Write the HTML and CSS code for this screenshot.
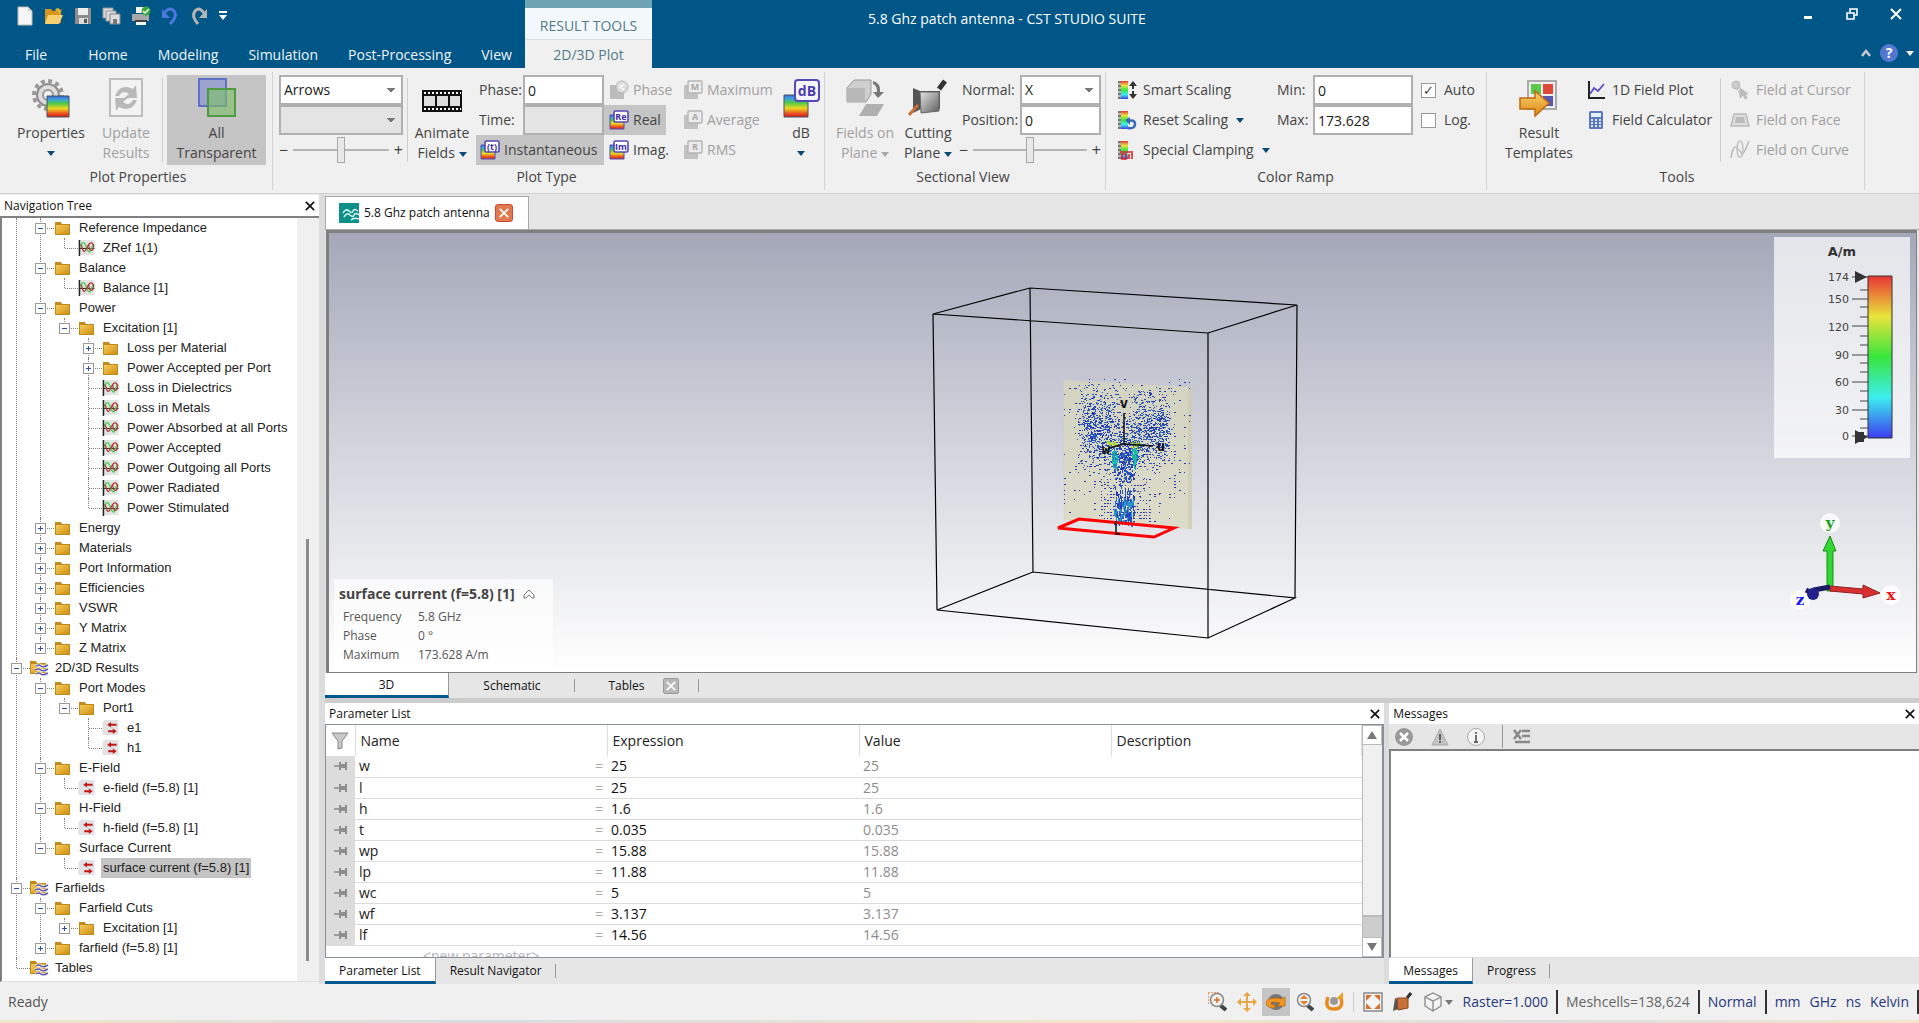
FILE: index.html
```html
<!DOCTYPE html>
<html lang="en">
<head>
<meta charset="utf-8">
<title>5.8 Ghz patch antenna - CST STUDIO SUITE</title>
<link rel="stylesheet" href="styles.css">
</head>
<body>
<svg class="defs" aria-hidden="true">
  <defs>
    <linearGradient id="rain" x1="0" y1="0" x2="0" y2="1"><stop offset="0" stop-color="#3c62d8"/><stop offset=".15" stop-color="#3aa0e0"/><stop offset=".35" stop-color="#4cc84a"/><stop offset=".6" stop-color="#f0d820"/><stop offset=".85" stop-color="#e84a20"/><stop offset="1" stop-color="#d82018"/></linearGradient>
    <linearGradient id="ramp" x1="0" y1="0" x2="0" y2="1"><stop offset="0" stop-color="#ea3434"/><stop offset=".25" stop-color="#e8e43c"/><stop offset=".5" stop-color="#38e63c"/><stop offset=".75" stop-color="#3ceef0"/><stop offset="1" stop-color="#3c3ef0"/></linearGradient>
    <linearGradient id="gold" x1="0" y1="0" x2="1" y2="1"><stop offset="0" stop-color="#f4c95c"/><stop offset=".5" stop-color="#e5ae36"/><stop offset="1" stop-color="#c99016"/></linearGradient>
    <linearGradient id="steel" x1="0" y1="0" x2="1" y2="1"><stop offset="0" stop-color="#e4e4e4"/><stop offset="1" stop-color="#5c5c5c"/></linearGradient>
    <linearGradient id="orange" x1="0" y1="0" x2="0" y2="1"><stop offset="0" stop-color="#f8d070"/><stop offset="1" stop-color="#e08a10"/></linearGradient>
  </defs>
  <symbol id="folder" viewBox="0 0 17 16"><path d="M1 2h6l1 2h8v11H1z" fill="#c08a1c"/><path d="M2 5h13v9H2z" fill="url(#gold)"/></symbol>
  <symbol id="wfolder" viewBox="0 0 19 16"><path d="M0 1h6l1 2h9v11H0z" fill="#c08a18"/><path d="M1 4h14v9H1z" fill="url(#gold)"/><path d="M6 6q3-2 5 0t7-1M5 10q4-2 6 0t7-1M6 14q3-2 5 0t7-1" fill="none" stroke="#fff" stroke-width="3"/><path d="M6 6q3-2 5 0t7-1M5 10q4-2 6 0t7-1M6 14q3-2 5 0t7-1" fill="none" stroke="#5a58a8" stroke-width="1.5"/></symbol>
  <symbol id="plot" viewBox="0 0 17 17"><path d="M1 0h16v16H1z" fill="#e3e3e3"/><path d="M1 0v17" stroke="#222" stroke-width="1.6"/><path d="M1 9h16" stroke="#222"/><path d="M2 8C4 1 6 1 8 7s4 7 5 4 2-6 4-6" fill="none" stroke="#4ad85c" stroke-width="1.7"/><path d="M2 5c2 0 2 7 4 7s3-4 4-6 3-4 5-2 1 7-1 7-3-3-3-6" fill="none" stroke="#b83238" stroke-width="1.3"/></symbol>
  <symbol id="arrows" viewBox="0 0 17 17"><path d="M2 0h15v16H0V3z" fill="#e2e2e2"/><path d="M5 5l4-3v2h6v2H9v2zM15 12l-4-3v2H6v2h5v2z" fill="#c01818"/></symbol>
  <symbol id="pin" viewBox="0 0 14 10"><path d="M0 5h5" stroke="#8a8a8a" stroke-width="1.5"/><path d="M5 1h2v2h4V1h2v8h-2V7H7v2H5z" fill="#8e8e8e"/></symbol>
  <symbol id="x" viewBox="0 0 12 12"><path d="M1 1l10 10M11 1L1 11" stroke="currentColor" stroke-width="2" fill="none"/></symbol>
  <symbol id="down" viewBox="0 0 8 5"><path d="M0 0h8L4 5z" fill="currentColor"/></symbol>
  <symbol id="card" viewBox="0 0 20 20"><path d="M1 5h14v14H1z" fill="url(#rain)" stroke="#4a50b8"/><rect x="5" y="1" width="14" height="11" rx="1.5" fill="#fff" stroke="#5548b8" stroke-width="1.6"/></symbol>
  <symbol id="gcard" viewBox="0 0 20 20"><path d="M1 5h14v14H1z" fill="#c2c2c2"/><rect x="5" y="1" width="14" height="12" rx="1" fill="#ececec" stroke="#b4b4b4" stroke-width="1.4"/></symbol>
  <symbol id="scale" viewBox="0 0 20 20"><path d="M1 1h10v18H1z" fill="#777"/><path d="M4 1h7v18H4z" fill="url(#ramp)"/><path d="M1 4h3M1 8h3M1 12h3M1 16h3" stroke="#fff"/></symbol>
  <symbol id="lens" viewBox="0 0 20 20"><path d="M12 13l6 5" stroke="#444" stroke-width="4"/><circle cx="9" cy="8" r="6.5" fill="#f2f2f2" stroke="#8a8a8a" stroke-width="1.6"/></symbol>
</svg>

<div class="app">
  <header class="titlebar">
    <div class="top-left">
      <div class="quick">
        <button aria-label="New"><svg viewBox="0 0 20 20"><path d="M3 1h10l4 4v14H3z" fill="#f6f6f6" stroke="#bbb"/><path d="M13 1v4h4" fill="#ccc"/></svg></button>
        <button aria-label="Open"><svg viewBox="0 0 20 20"><path d="M1 3h6l2 2h8v12H1z" fill="#d89418"/><path d="M4 9h15l-4 9H1z" fill="#f8d070"/><path d="M11 4q3-4 5 0l2-1-2 5-4-3z" fill="#e8b030"/></svg></button>
        <button aria-label="Save"><svg viewBox="0 0 20 20"><path d="M2 2h16v16H2z" fill="#8c8c8c"/><path d="M5 2h10v7H5z" fill="#eee"/><path d="M6 12h9v6H6z" fill="#ddd"/><path d="M11 13h3v4h-3z" fill="#555"/></svg></button>
        <button aria-label="Save copies"><svg viewBox="0 0 20 20"><path d="M1 2h10v10H1z" fill="#d8d8d8" stroke="#999"/><path d="M4 5h10v10H4z" fill="#d8d8d8" stroke="#999"/><path d="M8 8h10v10H8z" fill="#ddd" stroke="#888"/><path d="M11 13h4v5h-4z" fill="#777"/></svg></button>
        <button aria-label="Print"><svg viewBox="0 0 20 20"><path d="M5 1h9v6H5zM5 14h10v5H5z" fill="#f4f4f4"/><path d="M1 8h17v7H1z" fill="#a8a8a8"/><path d="M4 15h12" stroke="#444" stroke-width="2"/><circle cx="15" cy="5" r="4.5" fill="#38a838"/><path d="M12 5l2 2 4-4" stroke="#fff" fill="none" stroke-width="1.4"/></svg></button>
        <button aria-label="Undo"><svg viewBox="0 0 20 20"><path d="M4 7q6-7 10-2t-4 13" fill="none" stroke="#4a78e0" stroke-width="3"/><path d="M2 3v9h8z" fill="#4a78e0"/></svg></button>
        <button aria-label="Redo"><svg viewBox="0 0 20 20"><path d="M15 7q-5-7-9-2t3 13" fill="none" stroke="#b4b4b4" stroke-width="3"/><path d="M18 3v9h-8z" fill="#b4b4b4"/></svg></button>
        <button class="narrow" aria-label="Customize"><svg viewBox="0 0 10 12"><path d="M1 1h8v2H1zM1 5h8L5 10z" fill="#fff"/></svg></button>
      </div>
      <nav class="menu">
        <a href="#" class="m-file">File</a><a href="#">Home</a><a href="#">Modeling</a><a href="#">Simulation</a><a href="#">Post-Processing</a><a href="#">View</a>
      </nav>
    </div>
    <div class="context"><span class="ctx-title">RESULT TOOLS</span><a href="#" class="ctx-tab">2D/3D Plot</a></div>
    <div class="caption">5.8 Ghz patch antenna - CST STUDIO SUITE</div>
    <div class="win">
      <div class="win-row">
        <button aria-label="Minimize"><svg viewBox="0 0 12 12"><path d="M2 8h8v3H2z" fill="#fff"/></svg></button>
        <button aria-label="Restore"><svg viewBox="0 0 12 12"><path d="M4 4V1h7v6H8M1 5h7v6H1z" fill="none" stroke="#fff" stroke-width="1.6"/></svg></button>
        <button aria-label="Close"><svg><use href="#x"/></svg></button>
      </div>
      <div class="win-row help">
        <button aria-label="Collapse ribbon"><svg viewBox="0 0 12 12"><path d="M2 9l4-5 4 5" fill="none" stroke="#ccc" stroke-width="2.5"/></svg></button>
        <button class="q" aria-label="Help">?</button>
        <button class="tiny" aria-label="Help options"><svg viewBox="0 0 8 5"><use href="#down"/></svg></button>
      </div>
    </div>
  </header>

  <section class="ribbon">
    <div class="group g-prop">
      <div class="tools">
        <button class="big b78"><svg viewBox="0 0 40 40"><circle cx="17" cy="17" r="11" fill="#ddd" stroke="#8e8e8e" stroke-width="2"/><circle cx="17" cy="17" r="14" fill="none" stroke="#999" stroke-width="4" stroke-dasharray="4 3.3"/><circle cx="17" cy="17" r="5" fill="#f0f0f0" stroke="#999" stroke-width="2"/><path d="M16 18h22v21H16z" fill="url(#rain)" stroke="#456"/></svg><span>Properties</span><i class="dd"></i></button>
        <button class="big b72 off"><svg viewBox="0 0 40 40"><path d="M4 1h32v37H4z" fill="#f3f3f3" stroke="#bdbdbd" stroke-width="2"/><path d="M9 18q5-13 18-7l3-4 1 13H18l5-4q-6-5-10 2zM31 22q-5 13-18 7l-3 4-1-13h13l-5 4q6 5 10-2z" fill="#b9b9b9"/></svg><span>Update<br>Results</span></button>
        <span class="sep"></span>
        <button class="big b99 on"><svg viewBox="0 0 40 40"><path d="M2 1h27v27H2z" fill="#9ca4ce" stroke="#5e70c8" stroke-width="2"/><path d="M11 11h27v27H11z" fill="#7fbf6c" fill-opacity=".65" stroke="#4e9a42" stroke-width="2"/></svg><span>All<br>Transparent</span></button>
      </div>
      <h2>Plot Properties</h2>
    </div>

    <div class="group g-type">
      <div class="tools">
        <div class="col c128">
          <select aria-label="Plot type"><option>Arrows</option></select>
          <select aria-label="Plot subtype" disabled><option></option></select>
          <div class="slider"><span>−</span><input type="range" aria-label="Density" value="50"><span>+</span></div>
        </div>
        <span class="sep"></span>
        <button class="big b68"><svg viewBox="0 0 40 40"><path d="M0 12h40v22H0z" fill="#111"/><path d="M2 15h37M2 31h37" stroke="#fff" stroke-width="2" stroke-dasharray="2 2"/><path d="M2 18h11v10H2zM15 18h11v10H15zM28 18h10v10H28z" fill="#ddd"/></svg><span>Animate<br>Fields <i class="dd"></i></span></button>
        <div class="col c128 phase">
          <div class="field"><label for="ph">Phase:</label><input id="ph" value="0"></div>
          <div class="field"><label for="tm">Time:</label><input id="tm" disabled></div>
          <button class="small on"><svg viewBox="0 0 20 20"><use href="#card"/><text x="12" y="10" class="ic">(t)</text></svg>Instantaneous</button>
        </div>
        <div class="col c74">
          <button class="small off"><svg viewBox="0 0 20 20"><path d="M1 5h14v14H1z" fill="#bcbcbc"/><circle cx="13" cy="7" r="6" fill="#ddd" stroke="#b4b4b4"/><path d="M15 4l-4 3 4 3" fill="none" stroke="#fff" stroke-width="1.5"/></svg>Phase</button>
          <button class="small on fit"><svg viewBox="0 0 20 20"><use href="#card"/><text x="12" y="10" class="ic">Re</text></svg>Real</button>
          <button class="small"><svg viewBox="0 0 20 20"><use href="#card"/><text x="12" y="10" class="ic">Im</text></svg>Imag.</button>
        </div>
        <div class="col c102">
          <button class="small off"><svg viewBox="0 0 20 20"><use href="#gcard"/><text x="12" y="10" class="ic g">M</text></svg>Maximum</button>
          <button class="small off"><svg viewBox="0 0 20 20"><use href="#gcard"/><text x="12" y="10" class="ic g">A</text></svg>Average</button>
          <button class="small off"><svg viewBox="0 0 20 20"><use href="#gcard"/><text x="12" y="10" class="ic g">R</text></svg>RMS</button>
        </div>
        <button class="big b42"><svg viewBox="0 0 40 40"><path d="M3 17h24v22H3z" fill="url(#rain)" stroke="#456"/><rect x="14" y="2" width="24" height="21" rx="3" fill="#f4f4fc" stroke="#5548b8" stroke-width="2"/><text x="26" y="18" class="db">dB</text></svg><span>dB</span><i class="dd"></i></button>
      </div>
      <h2>Plot Type</h2>
    </div>

    <div class="group g-sect">
      <div class="tools">
        <button class="big b68 off"><svg viewBox="0 0 40 40"><path d="M2 10L9 2h17v14l-5 8H2z" fill="#cfcfcf" stroke="#999"/><path d="M2 10h18v14H2z" fill="#b8b8b8"/><path d="M28 3q8 2 7 11h4l-6 6-5-6h4q0-7-4-8z" fill="#777"/><path d="M21 26h18l-7 12H14z" fill="#b0b0b0"/></svg><span>Fields on<br>Plane <i class="dd"></i></span></button>
        <button class="big b58"><svg viewBox="0 0 40 40"><path d="M31 11l6-8" stroke="#333" stroke-width="5"/><path d="M5 10l7 3h20v18H13l-8 4z" fill="#555"/><path d="M12 14h19v19l-18 2z" fill="url(#steel)" stroke="#666"/><path d="M1 37l9-10" stroke="#c87038" stroke-width="3"/></svg><span>Cutting<br>Plane <i class="dd"></i></span></button>
        <div class="col c142">
          <div class="field"><label for="nm">Normal:</label><select id="nm"><option>X</option></select></div>
          <div class="field"><label for="ps">Position:</label><input id="ps" value="0"></div>
          <div class="slider"><span>−</span><input type="range" aria-label="Plane position" value="50"><span>+</span></div>
        </div>
      </div>
      <h2>Sectional View</h2>
    </div>

    <div class="group g-ramp">
      <div class="tools">
        <div class="col c164">
          <button class="small"><svg viewBox="0 0 20 20"><use href="#scale"/><path d="M16 1l4 5h-3v3h-2V6h-3zM16 19l4-5h-3v-3h-2v3h-3z" fill="#333"/></svg>Smart Scaling</button>
          <button class="small"><svg viewBox="0 0 20 20"><use href="#scale"/><path d="M10 11q8-2 8 3t-7 4" fill="none" stroke="#3a68b8" stroke-width="2.500"/><path d="M8 10l5-3v8z" fill="#3a68b8"/></svg>Reset Scaling <i class="dd"></i></button>
          <button class="small"><svg viewBox="0 0 20 20"><use href="#scale"/><path d="M3 12h13M5 19v-5h4v5zM12 19v-5M15 13v6" fill="none" stroke="#e02020" stroke-width="1.600"/></svg>Special Clamping <i class="dd"></i></button>
        </div>
        <div class="col c136">
          <div class="field"><label for="mn">Min:</label><input id="mn" value="0"></div>
          <div class="field"><label for="mx">Max:</label><input id="mx" value="173.628"></div>
        </div>
        <div class="col checks">
          <label><input type="checkbox" checked>Auto</label>
          <label><input type="checkbox">Log.</label>
        </div>
      </div>
      <h2>Color Ramp</h2>
    </div>

    <div class="group g-tools">
      <div class="tools">
        <button class="big b78"><svg viewBox="0 0 40 40"><path d="M9 3h28v28H9z" fill="#eee" stroke="#aaa" stroke-width="2"/><path d="M12 6h10v10H12z" fill="#5cc84c"/><path d="M24 6h10v10H24z" fill="#e04838"/><path d="M24 18h10v10H24z" fill="#5858b0"/><path d="M1 20h15v-7l14 12-14 13v-7H1z" fill="url(#orange)" stroke="#c06a10" stroke-width="1.500"/></svg><span>Result<br>Templates</span></button>
        <div class="col c142">
          <button class="small"><svg viewBox="0 0 20 20"><path d="M3 1v17h16" fill="none" stroke="#222" stroke-width="2"/><path d="M4 14l4-6 4 3 6-7" fill="none" stroke="#5a50c0" stroke-width="1.800"/></svg>1D Field Plot</button>
          <button class="small"><svg viewBox="0 0 20 20"><rect x="3" y="1" width="14" height="18" rx="1.500" fill="#5a78c0"/><path d="M5 3h10v4H5z" fill="#e8f0fc"/><path d="M5 10h10M5 13h10M5 16h10" stroke="#dce4f8" stroke-width="2" stroke-dasharray="2 2"/></svg>Field Calculator</button>
        </div>
        <span class="sep"></span>
        <div class="col c136 last">
          <button class="small off"><svg viewBox="0 0 20 20"><circle cx="6" cy="5" r="4" fill="#ccc" stroke="#bbb"/><path d="M7 9l3 5M10 8v10l3-3 2 4 2-1-2-4h3z" fill="#bbb" stroke="#bbb"/></svg>Field at Cursor</button>
          <button class="small off"><svg viewBox="0 0 20 20"><path d="M4 4h12l3 12H1z" fill="#ddd" stroke="#bbb" stroke-width="1.500"/><path d="M6 7h8l1 6H5z" fill="#bbb"/></svg>Field on Face</button>
          <button class="small off"><svg viewBox="0 0 20 20"><path d="M1 18q2-14 6-10t5 6 7-13" fill="none" stroke="#bbb" stroke-width="1.500"/><ellipse cx="10" cy="9" rx="3" ry="8" fill="none" stroke="#c4c4c4" stroke-width="1.500"/></svg>Field on Curve</button>
        </div>
      </div>
      <h2>Tools</h2>
    </div>
  </section>

  <main class="work">
    <aside class="nav">
      <header class="dock-title"><span>Navigation Tree</span><button aria-label="Close navigation tree"><svg><use href="#x"/></svg></button></header>
      <div class="nav-body">
        <ul class="tree">
          <li><ul>
            <li><div class="row"><button class="minus" aria-label="Collapse"></button><svg><use href="#folder"/></svg>Reference Impedance</div>
              <ul><li><div class="row"><svg><use href="#plot"/></svg>ZRef 1(1)</div></li></ul></li>
            <li><div class="row"><button class="minus" aria-label="Collapse"></button><svg><use href="#folder"/></svg>Balance</div>
              <ul><li><div class="row"><svg><use href="#plot"/></svg>Balance [1]</div></li></ul></li>
            <li><div class="row"><button class="minus" aria-label="Collapse"></button><svg><use href="#folder"/></svg>Power</div>
              <ul><li><div class="row"><button class="minus" aria-label="Collapse"></button><svg><use href="#folder"/></svg>Excitation [1]</div>
                <ul>
                  <li><div class="row"><button class="plus" aria-label="Expand"></button><svg><use href="#folder"/></svg>Loss per Material</div></li>
                  <li><div class="row"><button class="plus" aria-label="Expand"></button><svg><use href="#folder"/></svg>Power Accepted per Port</div></li>
                  <li><div class="row"><svg><use href="#plot"/></svg>Loss in Dielectrics</div></li>
                  <li><div class="row"><svg><use href="#plot"/></svg>Loss in Metals</div></li>
                  <li><div class="row"><svg><use href="#plot"/></svg>Power Absorbed at all Ports</div></li>
                  <li><div class="row"><svg><use href="#plot"/></svg>Power Accepted</div></li>
                  <li><div class="row"><svg><use href="#plot"/></svg>Power Outgoing all Ports</div></li>
                  <li><div class="row"><svg><use href="#plot"/></svg>Power Radiated</div></li>
                  <li><div class="row"><svg><use href="#plot"/></svg>Power Stimulated</div></li>
                </ul></li></ul></li>
            <li><div class="row"><button class="plus" aria-label="Expand"></button><svg><use href="#folder"/></svg>Energy</div></li>
            <li><div class="row"><button class="plus" aria-label="Expand"></button><svg><use href="#folder"/></svg>Materials</div></li>
            <li><div class="row"><button class="plus" aria-label="Expand"></button><svg><use href="#folder"/></svg>Port Information</div></li>
            <li><div class="row"><button class="plus" aria-label="Expand"></button><svg><use href="#folder"/></svg>Efficiencies</div></li>
            <li><div class="row"><button class="plus" aria-label="Expand"></button><svg><use href="#folder"/></svg>VSWR</div></li>
            <li><div class="row"><button class="plus" aria-label="Expand"></button><svg><use href="#folder"/></svg>Y Matrix</div></li>
            <li><div class="row"><button class="plus" aria-label="Expand"></button><svg><use href="#folder"/></svg>Z Matrix</div></li>
          </ul></li>
          <li><div class="row"><button class="minus" aria-label="Collapse"></button><svg class="wide"><use href="#wfolder"/></svg>2D/3D Results</div>
            <ul>
              <li><div class="row"><button class="minus" aria-label="Collapse"></button><svg><use href="#folder"/></svg>Port Modes</div>
                <ul><li><div class="row"><button class="minus" aria-label="Collapse"></button><svg><use href="#folder"/></svg>Port1</div>
                  <ul>
                    <li><div class="row"><svg><use href="#arrows"/></svg>e1</div></li>
                    <li><div class="row"><svg><use href="#arrows"/></svg>h1</div></li>
                  </ul></li></ul></li>
              <li><div class="row"><button class="minus" aria-label="Collapse"></button><svg><use href="#folder"/></svg>E-Field</div>
                <ul><li><div class="row"><svg><use href="#arrows"/></svg>e-field (f=5.8) [1]</div></li></ul></li>
              <li><div class="row"><button class="minus" aria-label="Collapse"></button><svg><use href="#folder"/></svg>H-Field</div>
                <ul><li><div class="row"><svg><use href="#arrows"/></svg>h-field (f=5.8) [1]</div></li></ul></li>
              <li><div class="row"><button class="minus" aria-label="Collapse"></button><svg><use href="#folder"/></svg>Surface Current</div>
                <ul><li><div class="row"><svg><use href="#arrows"/></svg><mark>surface current (f=5.8) [1]</mark></div></li></ul></li>
            </ul></li>
          <li><div class="row"><button class="minus" aria-label="Collapse"></button><svg class="wide"><use href="#wfolder"/></svg>Farfields</div>
            <ul>
              <li><div class="row"><button class="minus" aria-label="Collapse"></button><svg><use href="#folder"/></svg>Farfield Cuts</div>
                <ul><li><div class="row"><button class="plus" aria-label="Expand"></button><svg><use href="#folder"/></svg>Excitation [1]</div></li></ul></li>
              <li><div class="row"><button class="plus" aria-label="Expand"></button><svg><use href="#folder"/></svg>farfield (f=5.8) [1]</div></li>
            </ul></li>
          <li><div class="row"><svg class="wide"><use href="#wfolder"/></svg>Tables</div></li>
        </ul>
        <div class="nav-scroll"><span></span></div>
      </div>
    </aside>

    <section class="docs">
      <div class="doc-tabs">
        <div class="doc-tab"><svg viewBox="0 0 20 20"><path d="M0 0h20v20H0z" fill="#0e9088"/><path d="M4 10q3-5 6-2t4 0 5 0M5 14q3-5 6-2t4 0 5 0M12 17q3-3 8-1" fill="none" stroke="#d8f4f0" stroke-width="1.500"/></svg>5.8 Ghz patch antenna<button class="close-red" aria-label="Close document"><svg><use href="#x"/></svg></button></div>
      </div>
      <div class="viewport">
        <svg class="scene" viewBox="922 262 400 380" role="img" aria-label="Surface current on the antenna">
          <path d="M1060 378l4 1v140l-1 1z" fill="#d0ccd4" opacity=".5"/>
          <path d="M1063 379l125 7v142l-125-9z" fill="#d9d8bc" fill-opacity=".72"/>
          <path d="M1187 386h4v142h-4z" fill="#cfcdb4" fill-opacity=".9"/>
          <g id="current"></g>
          <path d="M932 313L1029 287L1296 304L1207 332ZM936 609L1032 571L1294 597L1207 637ZM932 313L936 609M1029 287L1032 571M1296 304L1294 597M1207 332V637" fill="none" stroke="#000" stroke-width="1.200"/>
          <path d="M1057 527L1078 518L1173 527L1153 536Z" fill="none" stroke="#f00" stroke-width="3"/>
          <path d="M1123 412V443M1123 443L1108 447M1123 443L1152 445M1115 520v13h4" fill="none" stroke="#111" stroke-width="1.500"/>
          <text x="1123" y="407" class="uvw">v</text><text x="1160" y="450" class="uvw">u</text><text x="1105" y="453" class="uvw">w</text>
        </svg>
        <div class="info">
          <h3>surface current (f=5.8) [1] <svg viewBox="0 0 12 12"><path d="M1 7l5-5 5 5v3H9L6 7l-3 3H1z" fill="none" stroke="#777"/></svg></h3>
          <dl><dt>Frequency</dt><dd>5.8 GHz</dd><dt>Phase</dt><dd>0 °</dd><dt>Maximum</dt><dd>173.628 A/m</dd></dl>
        </div>
        <div class="legend">
          <svg viewBox="0 0 136 221">
            <text x="68" y="19" class="unit">A/m</text>
            <path d="M94 39h24v162H94z" fill="url(#ramp)" stroke="#333"/>
            <path d="M78 62h16M78 89h16M78 118h16M78 145h16M78 173h16M78 40h16M78 199h16M86 53h8M86 70h8M86 80h8M86 99h8M86 108h8M86 126h8M86 135h8M86 154h8M86 164h8M86 182h8M86 191h8" stroke="#444"/>
            <path d="M81 34l12 6-12 6zM81 193l13 7-13 7zM84 195h6v10h-6z" fill="#333"/>
            <g class="ticks"><text x="75" y="44">174</text><text x="75" y="66">150</text><text x="75" y="94">120</text><text x="75" y="122">90</text><text x="75" y="149">60</text><text x="75" y="177">30</text><text x="75" y="203">0</text></g>
          </svg>
        </div>
        <svg class="triad" viewBox="0 0 112 100">
          <g fill="#fff" fill-opacity=".8"><circle cx="40" cy="10" r="10"/><circle cx="101" cy="82" r="10"/><circle cx="10" cy="87" r="10"/></g>
          <path d="M37 78V38h-4l7-15 6 15h-3v40z" fill="#30d830" stroke="#208820"/>
          <path d="M40 73l33 3v-4l17 8-17 5v-4l-33-3z" fill="#d83030" stroke="#902020"/>
          <path d="M40 74l-16 3-4 2-4-2" stroke="#1c1c60" stroke-width="5" fill="none"/><circle cx="23" cy="81" r="6" fill="#22228c"/>
          <text x="40" y="15" fill="#1aa01a">y</text><text x="101" y="87" fill="#f01818">x</text><text x="10" y="92" fill="#1818f0">z</text>
        </svg>
      </div>
      <div class="tabs view-tabs"><button class="tab active t3d">3D</button><button class="tab tsch">Schematic</button><button class="tab ttab">Tables <span class="close-gray"><svg><use href="#x"/></svg></span></button></div>
      <div class="splitter"></div>
      <div class="docks">
        <section class="dock">
          <header class="dock-title"><span>Parameter List</span><button aria-label="Close parameter list"><svg><use href="#x"/></svg></button></header>
          <div class="params">
            <div class="clip">
              <table>
                <colgroup><col class="k0"><col class="k1"><col class="k1"><col class="k1"><col></colgroup>
                <thead><tr><th><svg viewBox="0 0 18 18"><path d="M1 1h16l-6 8v7l-4 1V9z" fill="#c8c8c8" stroke="#888"/></svg></th><th>Name</th><th>Expression</th><th>Value</th><th>Description</th></tr></thead>
                <tbody>
                  <tr><td><svg><use href="#pin"/></svg></td><td>w<i>=</i></td><td>25</td><td>25</td><td></td></tr>
                  <tr><td><svg><use href="#pin"/></svg></td><td>l<i>=</i></td><td>25</td><td>25</td><td></td></tr>
                  <tr><td><svg><use href="#pin"/></svg></td><td>h<i>=</i></td><td>1.6</td><td>1.6</td><td></td></tr>
                  <tr><td><svg><use href="#pin"/></svg></td><td>t<i>=</i></td><td>0.035</td><td>0.035</td><td></td></tr>
                  <tr><td><svg><use href="#pin"/></svg></td><td>wp<i>=</i></td><td>15.88</td><td>15.88</td><td></td></tr>
                  <tr><td><svg><use href="#pin"/></svg></td><td>lp<i>=</i></td><td>11.88</td><td>11.88</td><td></td></tr>
                  <tr><td><svg><use href="#pin"/></svg></td><td>wc<i>=</i></td><td>5</td><td>5</td><td></td></tr>
                  <tr><td><svg><use href="#pin"/></svg></td><td>wf<i>=</i></td><td>3.137</td><td>3.137</td><td></td></tr>
                  <tr><td><svg><use href="#pin"/></svg></td><td>lf<i>=</i></td><td>14.56</td><td>14.56</td><td></td></tr>
                  <tr class="new"><td></td><td>&lt;new parameter&gt;</td><td></td><td></td><td></td></tr>
                </tbody>
              </table>
            </div>
            <div class="scroll"><button aria-label="Scroll up"><svg viewBox="0 0 10 8"><path d="M0 8h10L5 0z" fill="#777"/></svg></button><span class="thumb"></span><button aria-label="Scroll down"><svg viewBox="0 0 10 8"><path d="M0 0h10L5 8z" fill="#777"/></svg></button></div>
          </div>
          <div class="tabs"><button class="tab active">Parameter List</button><button class="tab">Result Navigator</button></div>
        </section>
        <section class="dock">
          <header class="dock-title"><span>Messages</span><button aria-label="Close messages"><svg><use href="#x"/></svg></button></header>
          <div class="msg-tools">
            <button aria-label="Errors"><svg viewBox="0 0 20 20"><circle cx="10" cy="10" r="9" fill="#999"/><path d="M6 6l8 8M14 6l-8 8" stroke="#fff" stroke-width="2.500"/></svg></button>
            <button aria-label="Warnings"><svg viewBox="0 0 20 20"><path d="M10 2l8 16H2z" fill="#c4c4c4" stroke="#aaa"/><path d="M10 7v6M10 14v2" stroke="#555" stroke-width="1.800"/></svg></button>
            <button aria-label="Information"><svg viewBox="0 0 20 20"><circle cx="10" cy="10" r="8.500" fill="#f4f4f4" stroke="#aaa"/><path d="M10 5v2M9 9h1v6M8 15h4" stroke="#666" stroke-width="1.800" fill="none"/></svg></button>
            <span class="sep"></span>
            <button aria-label="Clear list"><svg viewBox="0 0 20 20"><path d="M2 3l7 9M9 3l-7 9M10 4h8M10 9h8M3 15h15" stroke="#888" stroke-width="2.500"/></svg></button>
          </div>
          <div class="msg-body"></div>
          <div class="tabs"><button class="tab active">Messages</button><button class="tab">Progress</button></div>
        </section>
      </div>
    </section>
  </main>

  <footer class="status">
    <span class="ready">Ready</span>
    <div class="status-tools">
      <button aria-label="Zoom window"><svg viewBox="0 0 20 20"><path d="M0 12V0h12" fill="none" stroke="#e08a50" stroke-width="1.500" stroke-dasharray="2 1"/><use href="#lens"/><path d="M6 8h6M9 5v6" stroke="#d87020" stroke-width="1.500"/></svg></button>
      <button aria-label="Pan"><svg viewBox="0 0 20 20"><path d="M10 0l4 4h-3v5h5V6l4 4-4 4v-3h-5v5h3l-4 4-4-4h3v-5H4v3l-4-4 4-4v3h5V4H6z" fill="#e8a848"/></svg></button>
      <button class="on" aria-label="Rotate"><svg viewBox="0 0 20 20"><circle cx="10" cy="10" r="8" fill="#777"/><path d="M0 11q0-5 10-5 4 0 5 1l4-2v9h-8l3-3q-8-2-9 0t4 2v3q-9 0-9-5z" fill="#f09820" stroke="#b06010" stroke-width=".7"/></svg></button>
      <button aria-label="Zoom"><svg viewBox="0 0 20 20"><use href="#lens"/><path d="M5 7l4-4 4 4zM5 9l4 4 4-4z" fill="#e08030"/></svg></button>
      <button aria-label="Rotate in plane"><svg viewBox="0 0 20 20"><path d="M4 5q-4 12 6 12t7-11" fill="none" stroke="#e88a20" stroke-width="3.500"/><path d="M12 7l7 0V0z" fill="#f0a020"/><circle cx="10" cy="9" r="4" fill="#999"/></svg></button>
      <span class="sep"></span>
      <button aria-label="Reset view"><svg viewBox="0 0 20 20"><path d="M1 1h18v18H1z" fill="#f6f6f6" stroke="#888" stroke-width="1.500"/><path d="M3 3h6L3 9zM17 3h-6l6 6zM3 17h6l-6-6zM17 17h-6l6-6z" fill="#d87030"/></svg></button>
      <button aria-label="Cutting plane"><svg viewBox="0 0 20 20"><path d="M15 6l4-5" stroke="#333" stroke-width="3"/><path d="M3 6l3 2v9l-5 2z" fill="#555"/><path d="M5 6h11v10l-10 2z" fill="#c87038" stroke="#884820"/></svg></button>
      <button class="cube" aria-label="View cube"><svg viewBox="0 0 20 20"><path d="M10 1l8 4v9l-8 5-8-5V5zM2 5l8 4 8-4M10 9v10" fill="#f4f4f4" stroke="#888" stroke-width="1.300"/></svg><i class="dd"></i></button>
    </div>
    <span class="cell first">Raster=1.000</span><span class="cell mesh">Meshcells=138,624</span><span class="cell">Normal</span><span class="cell units"><span>mm</span><span>GHz</span><span>ns</span><span>Kelvin</span></span>
  </footer>
  <div class="edge"></div>
</div>
<script src="current.js"></script>
</body>
</html>
```
FILE: current.js
```js
// Draws the surface current arrows as single-pixel marks on the patch.
(function () {
  var seed = 7;
  function rnd() { seed = (seed * 16807) % 2147483647; return seed / 2147483647; }
  var paths = {};
  function dot(x, y, color, w, h) {
    x = Math.round(x); y = Math.round(y);
    paths[color] = (paths[color] || '') + 'M' + x + ' ' + y + 'h' + (w || 1) + 'v' + (h || 1) + 'h-' + (w || 1) + 'z';
  }
  function fill(n, x0, x1, y0, y1, colors, h) {
    for (var i = 0; i < n; i++) {
      var x = x0 + rnd() * (x1 - x0), y = y0 + rnd() * (y1 - y0);
      dot(x, y, colors[Math.floor(rnd() * colors.length)], rnd() > 0.7 ? 2 : 1, h || 1);
    }
  }
  // Soft-edged cloud round a centre.
  function cloud(n, cx, cy, rx, ry, colors) {
    for (var i = 0; i < n; i++) {
      var dx = rnd() + rnd() - 1, dy = rnd() + rnd() - 1;
      dot(cx + dx * rx, cy + dy * ry, colors[Math.floor(rnd() * colors.length)], rnd() > 0.6 ? 2 : 1, 1);
    }
  }
  function columns(n, x0, x1, step, y0, y1) {
    for (var i = 0; i < n; i++) {
      var x = x0 + step * Math.floor(rnd() * (x1 - x0) / step);
      dot(x, y0 + 3 * Math.floor(rnd() * (y1 - y0) / 3), '#2a38b4', rnd() > 0.6 ? 2 : 1);
    }
  }
  var blues = ['#2438b8', '#2450c4', '#2a62bc', '#30509c'];
  columns(200, 1063, 1192, 5, 378, 500);
  columns(200, 1074, 1176, 3, 384, 474);
  columns(40, 1063, 1175, 5, 490, 522);
  cloud(480, 1098, 424, 24, 44, blues);
  cloud(440, 1147, 426, 26, 44, blues);
  cloud(260, 1123, 440, 44, 40, blues);
  fill(120, 1155, 1166, 410, 446, blues);
  fill(120, 1081, 1094, 404, 446, blues);
  cloud(200, 1124, 452, 24, 26, blues);
  fill(140, 1113, 1134, 450, 480, blues, 2);
  columns(170, 1100, 1150, 3, 478, 521);
  fill(70, 1113, 1133, 482, 521, blues, 4);
  fill(90, 1113, 1132, 496, 522, ['#2878cc', '#2a98cc', '#2450c4'], 4);
  fill(44, 1111, 1115, 446, 466, ['#18c0b8', '#20a0a8', '#1888c0'], 3);
  fill(44, 1131, 1135, 446, 466, ['#18c0b8', '#20b8a0', '#1888c0'], 3);
  fill(30, 1106, 1114, 440, 444, ['#90d020', '#c8d818']);
  fill(34, 1130, 1139, 440, 447, ['#58b830', '#a0c020', '#389048']);
  var g = document.getElementById('current');
  Object.keys(paths).forEach(function (c) {
    var p = document.createElementNS('http://www.w3.org/2000/svg', 'path');
    p.setAttribute('d', paths[c]);
    p.setAttribute('fill', c);
    g.appendChild(p);
  });
})();
```
FILE: styles.css
```css
* { box-sizing: border-box; }
body { margin: 0; font: 14px/20px "Open Sans", "Noto Sans", sans-serif; color: #444; background: #e6e6e6; }
button, input, select { font: inherit; color: inherit; margin: 0; padding: 0; border: 0; background: none; border-radius: 0; }
h2, h3, dl, dd, ul { margin: 0; padding: 0; font-weight: normal; list-style: none; }
a { color: inherit; text-decoration: none; }
svg { display: block; flex: none; }
.defs { position: absolute; width: 0; height: 0; }
.app { display: flex; flex-direction: column; height: 100vh; min-height: 700px; overflow: hidden; }
.dd { display: inline-block; border: 4px solid transparent; border-top: 5px solid #0b4a78; border-bottom: 0; vertical-align: middle; }
.off .dd { border-top-color: #aaa; }
.sep { width: 1px; background: #cfcfcf; flex: none; }

/* title bar */
.titlebar { display: flex; height: 68px; background: #005687; color: #fff; flex: none; }
.top-left { width: 525px; display: flex; flex-direction: column; justify-content: space-between; }
.quick { display: flex; gap: 9px; padding: 6px 0 0 15px; }
.quick svg { width: 20px; height: 20px; }
.quick .narrow svg { width: 10px; height: 12px; }
.menu { display: flex; gap: 30px; padding-bottom: 2px; line-height: 22px; color: #eef4f8; }
.m-file { padding: 0 11px 0 25px; }
.context { width: 127px; display: flex; flex-direction: column; text-align: center; border-top: 8px solid #6ea4b2; color: #547a88; }
.ctx-title { background: #f3f8fc; height: 31px; line-height: 36px; }
.ctx-tab { background: #f0f0f0; flex: 1; line-height: 30px; border-top: 1px solid #d8dde0; }
.caption { flex: 1; padding: 9px 0 0 216px; }
.win { padding-right: 2px; }
.win-row { display: flex; justify-content: flex-end; align-items: center; gap: 32px; height: 28px; padding-right: 15px; }
.win-row svg { width: 12px; height: 12px; }
.win-row.help { gap: 8px; padding: 0 3px 0 0; height: 26px; margin-top: 12px; }
.win-row .q { width: 18px; height: 18px; border-radius: 50%; background: #5478d0; line-height: 18px; font-weight: bold; color: #fff; }
.win-row .tiny svg { width: 8px; height: 5px; }

/* ribbon */
.ribbon { display: flex; height: 126px; padding: 4px 0 3px; background: #f0f0f0; border-bottom: 1px solid #d0d0d0; flex: none; }
.group { display: flex; flex-direction: column; border-right: 1px solid #d2d2d2; padding-top: 3px; }
.group h2 { font-size: 14px; line-height: 24px; text-align: center; }
.tools { display: flex; height: 90px; }
.tools .sep { margin: 3px 0; }
.g-prop { width: 273px; padding-left: 12px; }
.g-type { width: 552px; padding-left: 6px; }
.g-sect { width: 281px; padding-left: 6px; }
.g-ramp { width: 381px; padding-left: 9px; }
.g-tools { width: 378px; padding-left: 13px; }
.g-type h2, .g-sect h2, .g-ramp h2, .g-tools h2 { padding-right: 10px; }
.g-prop h2 { padding-right: 8px; }
.g-prop .sep { margin-right: 4px; }
.big { display: flex; flex-direction: column; align-items: center; line-height: 20px; padding-top: 3px; white-space: nowrap; }
.big > svg { width: 40px; height: 40px; margin-bottom: 5px; }
.big > .dd { margin-top: 8px; }
.b42 { width: 42px; } .b58 { width: 58px; } .b68 { width: 68px; } .b72 { width: 72px; } .b78 { width: 78px; } .b99 { width: 99px; }
.on { background: #c5c5c5; }
.off { color: #a0a0a0; }
.col { display: flex; flex-direction: column; }
.c128 { width: 128px; padding-right: 4px; } .c128.phase { padding-right: 0; }
.c74 { width: 74px; } .c102 { width: 102px; }
.c142 { width: 142px; } .c164 { width: 164px; } .c136 { width: 136px; }
.col > * { height: 30px; flex: none; }
.small { display: flex; align-items: center; gap: 4px; padding: 0 5px; white-space: nowrap; }
.phase .small { padding: 0 4px; }
.c74 .small, .c102 .small { padding-left: 5px; }
.small svg { width: 20px; height: 20px; }
.small .dd { margin-left: 2px; }
.fit { align-self: flex-start; }
.c164 .small { padding-left: 2px; gap: 6px; }
.c142 .small { padding-left: 8px; gap: 6px; }
.last .small { padding-left: 9px; gap: 6px; }
.field { display: flex; align-items: center; }
.field label { flex: 1; padding-left: 3px; white-space: nowrap; }
.field input, .field select, .col > select { height: 30px; width: 81px; border: 2px solid #b0b0b0; background: #fff; padding: 0 3px; color: #222; }
.col > select { width: 124px; }
select { appearance: none; }
.field select, .col > select { background: linear-gradient(to bottom right, #777 50%, transparent 50%) no-repeat right 6px center / 4px 5px, linear-gradient(to bottom left, #777 50%, transparent 50%) no-repeat right 10px center / 4px 5px, #fff; }
.field input:disabled, .col > select:disabled { background-color: #e4e4e4; opacity: 1; }
.g-sect .c142 { padding-left: 2px; width: 144px; }
.c136 .field input { width: 100px; }
.c136 .field label { padding-left: 0; }
.slider { display: flex; align-items: center; gap: 5px; font-size: 16px; }
.slider input { appearance: none; flex: 1; min-width: 0; height: 26px; background: linear-gradient(#b4b4b4, #b4b4b4) no-repeat center / 100% 2px; }
.slider input::-webkit-slider-thumb { appearance: none; width: 8px; height: 26px; background: #e8e8e8; border: 1px solid #a8a8a8; }
.g-ramp .c136 { margin-left: -2px; }
.checks { padding-left: 8px; }
.checks label { display: flex; align-items: center; gap: 8px; }
.checks input { appearance: none; width: 15px; height: 15px; border: 1px solid #999; background: #fff; }
.checks input:checked::before { content: "✓"; display: block; font: 13px/13px "DejaVu Sans", sans-serif; text-align: center; }
.ic { font: bold 9px "Open Sans", sans-serif; fill: #3c2ca8; text-anchor: middle; }
.ic.g { fill: #a8a8a8; }
.db { font: bold 14px "Open Sans", sans-serif; fill: #4c3cb0; text-anchor: middle; }

/* work area */
.work { flex: 1; min-height: 0; display: grid; grid-template-columns: 319px minmax(0, 1fr); gap: 6px; background: #dcdcdc; }
.dock-title { display: flex; align-items: center; justify-content: space-between; height: 21px; padding: 0 4px; background: #fff; color: #111; font-size: 12px; line-height: 20px; flex: none; }
.dock-title svg { width: 10px; height: 10px; }
.nav { display: flex; flex-direction: column; background: #f0f0f0; min-height: 0; padding: 1px 0 2px; }
.nav-body { flex: 1; min-height: 0; display: flex; border: 2px solid #808080; border-right: 0; border-bottom: 1px solid #e0e0e0; background: #fff; overflow: hidden; }
.nav-scroll { width: 22px; background: #f0f0f0; padding: 321px 0 20px 9px; }
.nav-scroll span { display: block; width: 3px; height: 100%; background: #8c8c8c; }
.tree { flex: 1; padding-left: 2px; font: 13px/20px "Liberation Sans", Arial, sans-serif; color: #222; white-space: nowrap; overflow: hidden; }
.tree li { position: relative; }
.tree ul { padding-left: 24px; }
.tree li::before { content: ""; position: absolute; left: 12px; top: 0; bottom: 0; border-left: 1px dotted #808080; }
.tree li:last-child::before { bottom: auto; height: 10px; }
.row { display: flex; align-items: center; height: 20px; padding-left: 26px; position: relative; }
.row::before { content: ""; position: absolute; left: 13px; top: 10px; width: 13px; border-top: 1px dotted #808080; }
.row svg { width: 17px; height: 16px; margin-right: 8px; }
.row svg.wide { width: 19px; margin-right: 6px; }
.row button { position: absolute; left: 7px; top: 5px; width: 11px; height: 11px; border: 1px solid #999; background: linear-gradient(#3050a0, #3050a0) no-repeat center / 5px 1px, #fff; z-index: 1; }
.row button.plus { background: linear-gradient(#3050a0, #3050a0) no-repeat center / 5px 1px, linear-gradient(#3050a0, #3050a0) no-repeat center / 1px 5px, #fff; }
mark { background: #c4c4c4; color: #222; padding: 0 2px; margin-left: -2px; }

.docs { display: flex; flex-direction: column; min-width: 0; min-height: 0; background: #e6e6e6; }
.doc-tabs { height: 36px; padding-top: 2px; border-bottom: 1px solid #a8a8a8; display: flex; flex: none; }
.doc-tab { display: flex; align-items: center; gap: 5px; width: 204px; background: #fff; border: 1px solid #a8a8a8; border-bottom: 0; padding-left: 13px; font-size: 12px; color: #111; white-space: nowrap; }
.doc-tab > svg { width: 20px; height: 20px; }
.close-red { width: 18px; height: 18px; background: #e07850; border: 1px solid #d04838; border-radius: 3px; padding: 3px; color: #fff; }
.close-red svg { width: 10px; height: 10px; }
.viewport { position: relative; flex: 1; min-height: 0; margin: 0 2px 0 1px; display: grid; place-items: center; overflow: hidden; border: 2px solid #808080; border-width: 3px 1px 1px 3px; background: linear-gradient(#a4a8b8, #c4c6d2 33%, #e2e3e8 66%, #fff); }
.scene { width: 400px; height: 380px; }
.uvw { font: bold 14px "DejaVu Sans Mono", monospace; text-anchor: middle; fill: #111; }
.info { position: absolute; left: 5px; bottom: 4px; width: 219px; height: 89px; padding: 5px; background: rgba(255,255,255,.65); font-size: 12px; line-height: 19px; color: #555; white-space: nowrap; }
.info h3 { font-weight: bold; font-size: 14px; line-height: 20px; margin-bottom: 3px; color: #444; display: flex; align-items: center; gap: 8px; }
.info h3 svg { width: 12px; height: 12px; }
.info dl { display: grid; grid-template-columns: 75px 1fr; padding-left: 4px; }
.legend { position: absolute; right: 6px; top: 4px; width: 136px; height: 221px; background: rgba(255,255,255,.7); }
.unit { font: bold 13px "DejaVu Sans", sans-serif; text-anchor: middle; fill: #333; }
.ticks text { font: 11px "DejaVu Sans", sans-serif; text-anchor: end; fill: #444; }
.triad { position: absolute; right: 14px; bottom: 59px; width: 112px; height: 100px; }
.triad text { font: bold 15px "DejaVu Serif", serif; text-anchor: middle; }

.tabs { display: flex; height: 26px; background: #e6e6e6; flex: none; font-size: 12px; }
.tab { position: relative; padding: 0 14px; color: #111; display: flex; align-items: center; justify-content: center; gap: 18px; }
.tab:not(.active)::after { content: ""; position: absolute; right: 0; top: 6px; bottom: 6px; border-right: 1px solid #999; }
.tab.active { background: #fff; border-right: 1px solid #999; border-bottom: 3px solid #00588c; padding-top: 2px; }
.view-tabs { height: 25px; }
.t3d { width: 124px; } .tsch { width: 126px; } .ttab { width: 124px; padding: 0 17px 0 30px; }
.close-gray { width: 16px; height: 16px; background: #b8b8b8; border: 1px solid #999; border-radius: 2px; padding: 2px; color: #fff; }
.close-gray svg { width: 10px; height: 10px; }
.splitter { height: 5px; background: #cdcdcd; flex: none; }
.docks { display: grid; grid-template-columns: minmax(0, 2fr) minmax(0, 1fr); gap: 5px; background: #dcdcdc; height: 281px; flex: none; }
.dock { display: flex; flex-direction: column; min-width: 0; min-height: 0; }
.params { display: flex; flex: 1; min-height: 0; border: 2px solid #8a9098; border-width: 1px 2px 1px 1px; background: #fff; }
.clip { flex: 1; overflow: hidden; min-width: 0; }
table { width: 100%; border-collapse: collapse; table-layout: fixed; color: #222; }
.k0 { width: 29px; } .k1 { width: 252px; }
th { height: 31px; padding: 0 5px; text-align: left; font-weight: normal; border-right: 1px solid #ddd; }
th svg { width: 18px; height: 18px; }
td { height: 21px; padding: 0 4px; line-height: 20px; border-bottom: 1px solid #dcdcdc; }
td:first-child { background: #dcdcdc; padding-left: 8px; }
td svg { width: 14px; height: 10px; }
td i { float: right; font-style: normal; color: #aaa; }
td:nth-child(3) { color: #111; }
td:nth-child(4) { color: #8c8c8c; }
.new td, .new td:first-child { background: #fff; color: #b4b4b4; border: 0; }
.new td:nth-child(2) { padding-left: 68px; }
.scroll { width: 20px; display: flex; flex-direction: column; background: #f0f0f0; border-left: 1px solid #bbb; }
.scroll button { height: 20px; background: #fff; border: 1px solid #bbb; border-left: 0; display: grid; place-items: center; }
.scroll svg { width: 10px; height: 8px; }
.scroll .thumb { margin-top: auto; height: 22px; background: #cdcdcd; border-top: 2px solid #bbb; }
.msg-tools { display: flex; gap: 16px; height: 25px; padding: 1px 5px; background: #e6e6e6; flex: none; }
.msg-tools .sep { background: #999; margin: 0 -7px 0 0; }
.msg-tools svg { width: 20px; height: 20px; }
.msg-body { flex: 1; background: #fff; border: 2px solid #808080; border-right-width: 0; border-bottom: 1px solid #ddd; }

/* status bar */
.status { display: flex; align-items: center; height: 36px; padding-left: 8px; background: #f0f0f0; flex: none; color: #555; white-space: nowrap; }
.ready { flex: 1; }
.status-tools { display: flex; align-items: center; gap: 1px; }
.status-tools button { width: 28px; height: 28px; display: flex; align-items: center; justify-content: center; }
.status-tools svg { width: 20px; height: 20px; }
.status-tools .sep { height: 20px; margin: 0 4px; }
.status-tools .cube { width: 42px; gap: 2px; }
.cube .dd { border-top-color: #777; }
.cell { color: #26387c; border-right: 2px solid #333; padding: 0 8px; line-height: 24px; }
.cell.first { padding-left: 4px; }
.mesh { color: #666; }
.units { display: flex; gap: 9px; }
.edge { height: 3px; flex: none; background: linear-gradient(90deg, #f0e4cc, #d8dce0 25%, #f4e4cc 60%, #dcdcdc 80%, #f4e4d0); }
```
